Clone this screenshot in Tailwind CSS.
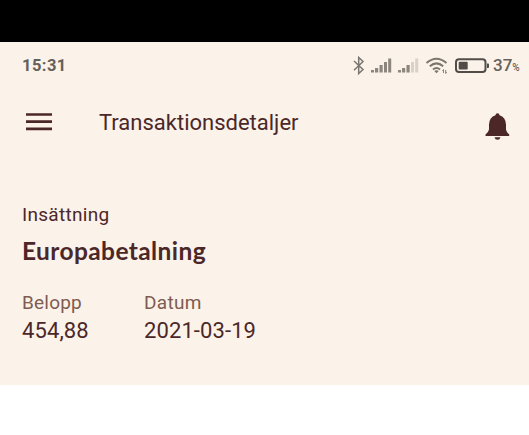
<!DOCTYPE html>
<html lang="sv">
  <head>
    <meta charset="UTF-8" />
    <meta name="viewport" content="width=device-width, initial-scale=1.0" />
    <title>Transaktionsdetaljer</title>
    <script src="https://cdn.jsdelivr.net/npm/@tailwindcss/browser@4"></script>
  </head>

  <body class="bg-white font-[Roboto,sans-serif] text-[#4b2728] overflow-hidden">
    <div class="h-[42px] bg-black"></div>

    <div class="h-[343px] bg-[#fbf2ea]">
      <!-- Status bar -->
      <div class="flex h-[47px] items-center justify-between pl-[22px] pr-[9px] text-[#65615a]">
        <span class="pt-0.5 text-[16.5px] font-bold tracking-[0.45px]">15:31</span>
        <div class="flex items-center">
          <svg class="h-[30px] w-[140px]" viewBox="350 50.5 140 30" fill="none">
            <path d="M354 60.5L363 69L358.7 73V57L363 61L354 69.7" stroke="#7b766f" stroke-width="1.5" />
            <path d="M371 69.5h3v2.5h-3zM375 67.5h3.2v4.5h-3.2zM379.5 64.5h3.2v7.5h-3.2zM384 61.5h3v10.5h-3zM388.2 58h3v14h-3z" fill="#8b867e" />
            <path d="M398 69.5h3v2.5h-3zM402 67.5h3.2v4.5h-3.2zM406.500 64.5h3.2v7.5h-3.2z" fill="#8b867e" />
            <path d="M411 61.5h3v10.5h-3zM415.2 58h3v14h-3z" fill="#d9d2ca" />
            <path d="M426.5 62.5Q436.5 54 446.5 62.5M429.8 65.8Q436.5 60 443.2 65.8M433 69Q436.5 66 440 69" stroke="#7b766f" stroke-width="2" />
            <path d="M434.3 70.5Q436.5 69 438.7 70.5L436.5 72.8z" fill="#7b766f" />
            <path d="M443.5 69v3.5M442.5 70.3l1-1.3M445.7 69.5V73M446.7 71.7l-1 1.3" stroke="#858078" stroke-width="1" />
            <rect x="456" y="58.8" width="29.5" height="12.6" rx="3" stroke="#514c48" stroke-width="2" />
            <rect x="458.7" y="61.2" width="9" height="7.8" rx="1" fill="#514c48" />
            <path d="M487 63h1.2q.8 0 .8 1v2.5q0 1-.8 1H487z" fill="#514c48" />
          </svg>
          <span class="ml-[3px] flex w-[27px] items-baseline text-[17px] font-medium">37<span class="text-[10px]">%</span></span>
        </div>
      </div>

      <!-- App bar -->
      <header class="flex h-[66px] items-center pl-[25.5px] pr-[19px]">
        <svg class="-mt-px mr-[47.5px] h-[20px] w-[26px]" viewBox="0 0 26 20" fill="none">
          <path d="M0 2.5h26M0 9.7h26M0 16.9h26" stroke="#4b2728" stroke-width="2.7" />
        </svg>
        <h1 class="text-[22px]">Transaktionsdetaljer</h1>
        <svg class="ml-auto mt-[9px] h-[28px] w-[26px]" viewBox="484 113 26 28" fill="#4b2728">
          <path d="M495.5 115.2Q495.5 113.2 497.5 113.2T499.5 115.2Q505.7 117 506 124.5V129.5Q506.2 132 509.2 134.5V136H485.5V134.5Q488.7 132 489 129.5V124.5Q489.3 117 495.5 115.2zM494.5 137.2h6q-.6 2.6-3 2.6t-3-2.6z" />
        </svg>
      </header>

      <!-- Transaction -->
      <main class="px-[22px] pt-12">
        <p class="text-[19px] leading-6 tracking-[0.3px]">Insättning</p>
        <h2 class="mt-[9px] font-[Lato,sans-serif] text-[24.5px] font-bold leading-[30px] tracking-[0.4px]">Europabetalning</h2>
        <dl class="mt-[25px] flex">
          <div class="w-[122px]">
            <dt class="text-[19px] leading-6 tracking-[0.2px] text-[#805b50]">Belopp</dt>
            <dd class="mt-0.5 text-[22px] leading-7 tracking-[0.1px]">454,88</dd>
          </div>
          <div>
            <dt class="text-[19px] leading-6 tracking-[0.3px] text-[#805b50]">Datum</dt>
            <dd class="mt-0.5 text-[22px] leading-7 tracking-[0.1px]">2021-03-19</dd>
          </div>
        </dl>
      </main>
    </div>
  </body>
</html>
